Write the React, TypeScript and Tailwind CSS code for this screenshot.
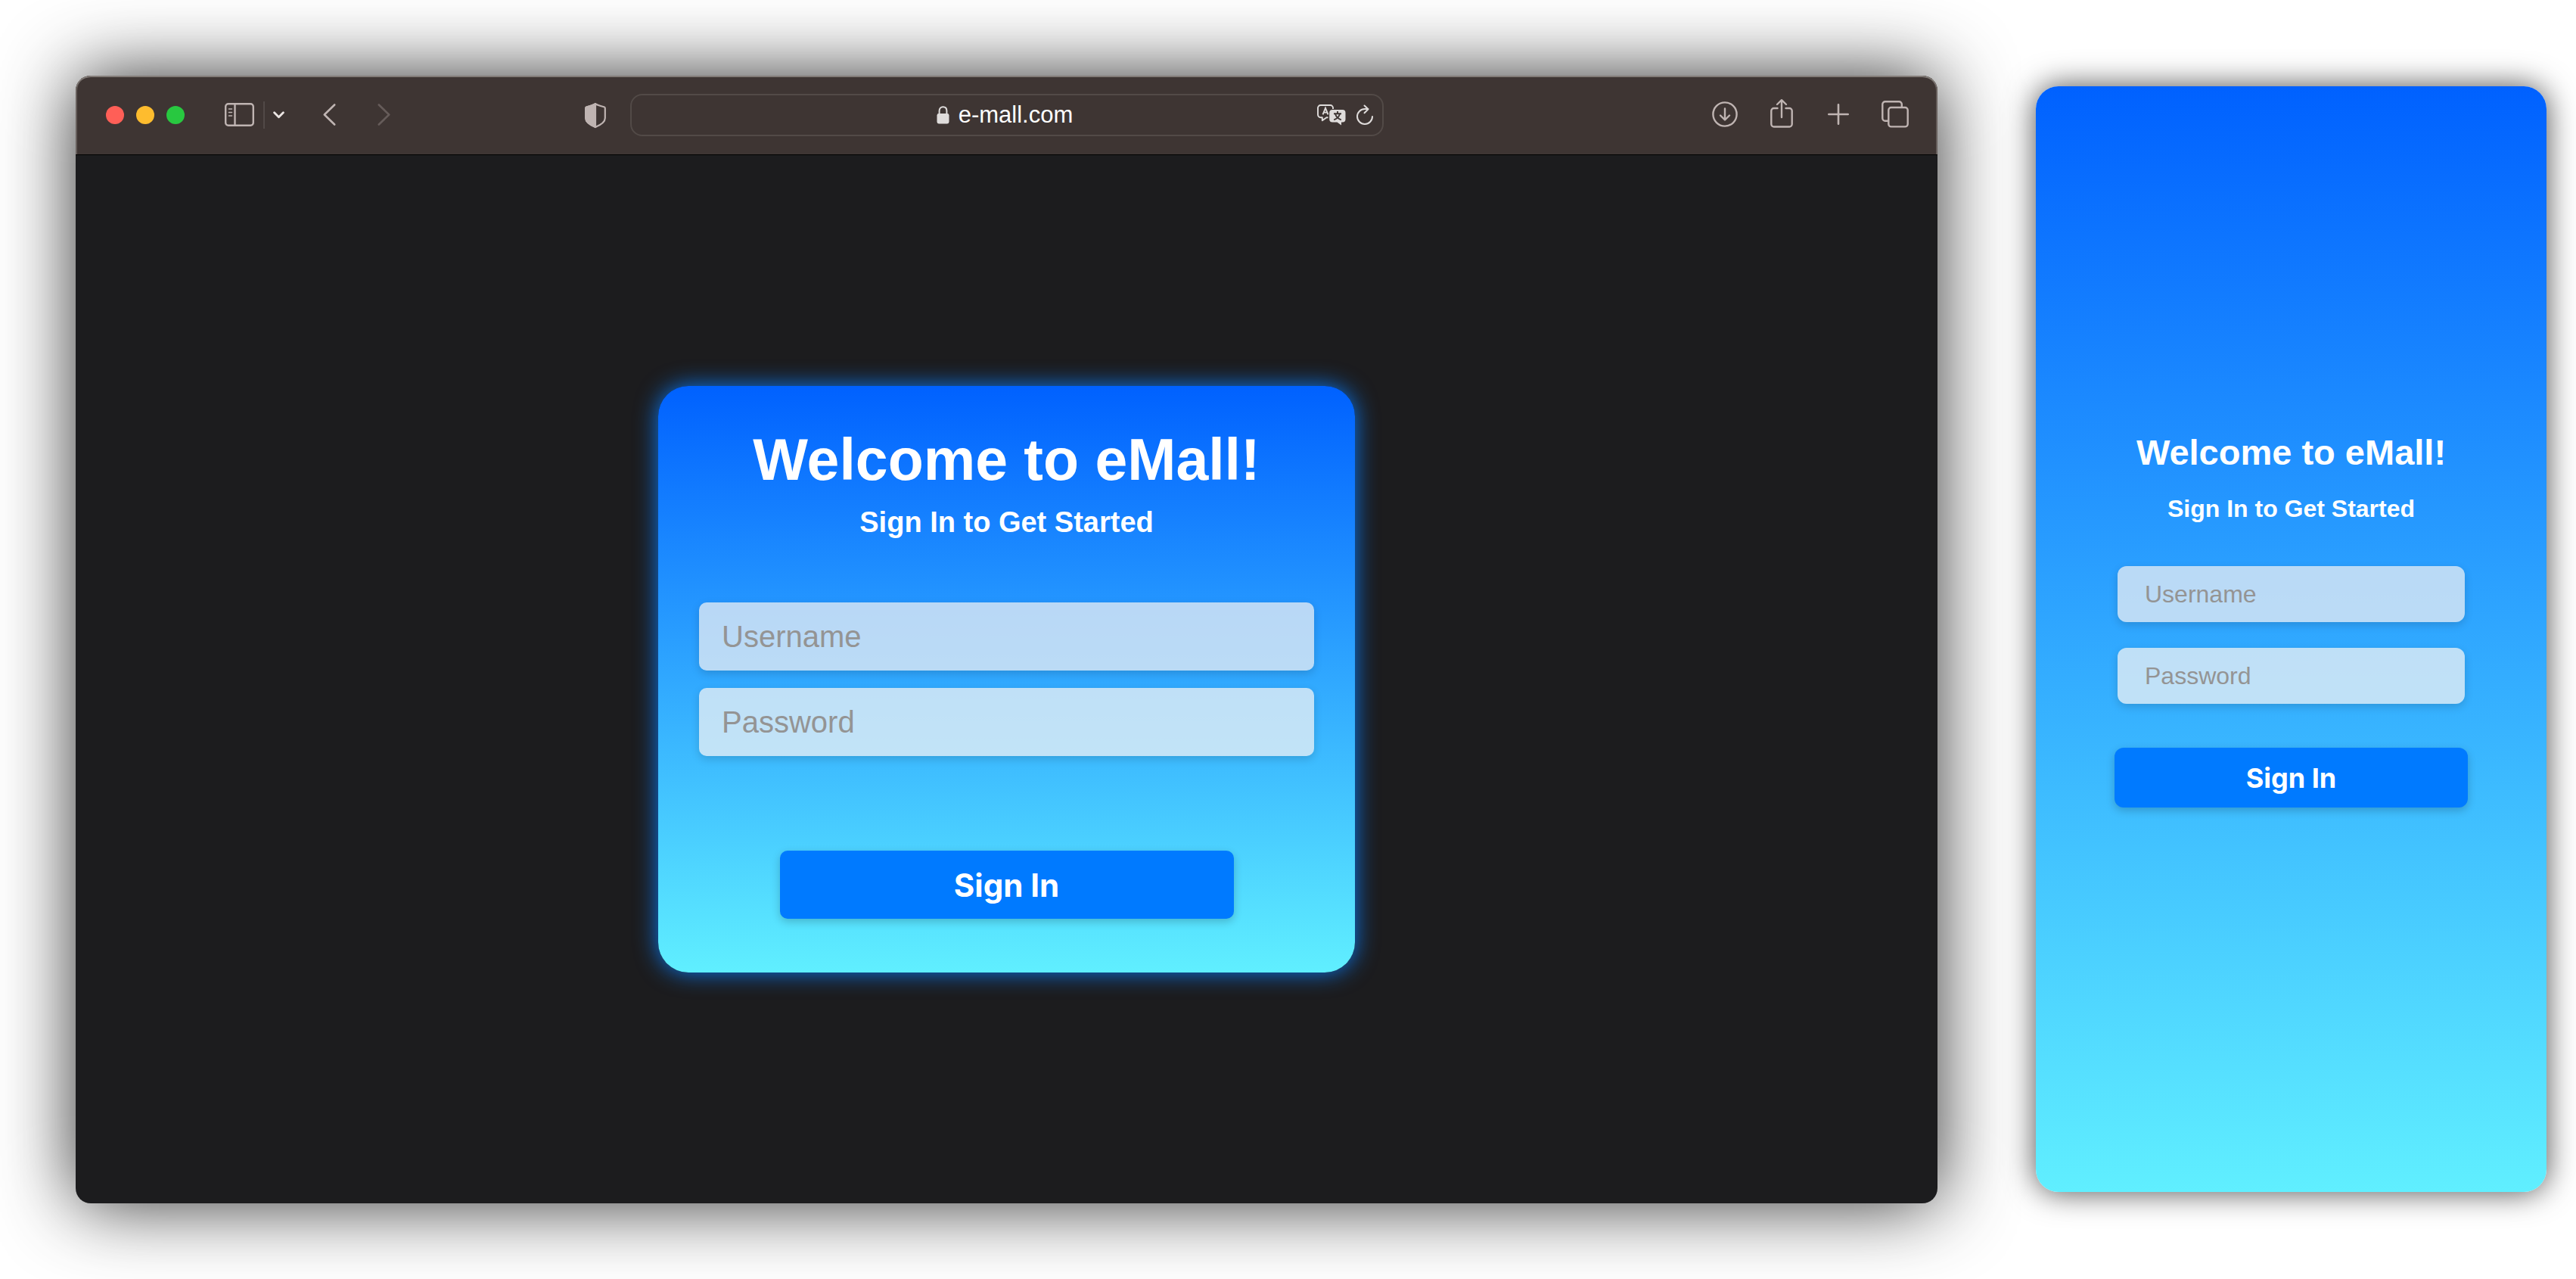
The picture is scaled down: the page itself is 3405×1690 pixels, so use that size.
import React from "react";

const icon = "block shrink-0 overflow-visible fill-none stroke-[#bfb4b2]";

function ToolButton({ label, children }: { label: string; children: React.ReactNode }) {
  return (
    <button type="button" aria-label={label} className="flex h-10 w-10 items-center justify-center pb-0.5">
      {children}
    </button>
  );
}

function Toolbar() {
  return (
    <header className="grid h-[105px] grid-cols-[1fr_996px_1fr] items-center rounded-t-[20px] border-b border-black bg-[#3e3533] shadow-[inset_0_2px_0_#827b77,inset_2px_0_0_#665e5b,inset_-2px_0_0_#665e5b]">
      <div className="flex items-center pr-8 pl-10">
        <div className="flex gap-4">
          <span className="size-6 rounded-full bg-[#ff5f57]" />
          <span className="size-6 rounded-full bg-[#febc2e]" />
          <span className="size-6 rounded-full bg-[#28c840]" />
        </div>
        <div className="ml-[52px] flex items-center">
          <ToolButton label="Show sidebar">
            <svg width="39" height="31" viewBox="0 0 39 31" className={icon} strokeWidth="2.4" strokeLinecap="round">
              <rect x="1.2" y="1.2" width="36.6" height="28.6" rx="3.6" />
              <path d="M13.5 1.2v28.6" />
              <path d="M5.500 8h4M5.500 12.500h4M5.500 17h4" strokeWidth="1.6" />
            </svg>
          </ToolButton>
          <span className="ml-3 h-9 w-0.5 bg-[#514947]" />
          <button type="button" aria-label="Tab groups" className="ml-[11px]">
            <svg width="15" height="10" viewBox="0 0 15 10" className="block fill-none stroke-[#ece6e4]" strokeWidth="2.8" strokeLinecap="round" strokeLinejoin="round">
              <path d="M1.6 1.8 7.5 7.8 13.4 1.8" />
            </svg>
          </button>
        </div>
        <div className="ml-[39px] flex gap-8">
          <ToolButton label="Back">
            <svg width="17" height="29" viewBox="0 0 17 29" className={icon} strokeWidth="2.6" strokeLinecap="round" strokeLinejoin="round">
              <path d="M15.2 1.5 1.8 14.5 15.2 27.5" />
            </svg>
          </ToolButton>
          <ToolButton label="Forward">
            <svg width="17" height="29" viewBox="0 0 17 29" className="block fill-none stroke-[#665c5a]" strokeWidth="2.6" strokeLinecap="round" strokeLinejoin="round">
              <path d="M1.8 1.5 15.2 14.5 1.8 27.5" />
            </svg>
          </ToolButton>
        </div>
        <div className="ml-auto">
          <button type="button" aria-label="Privacy report" className="block">
            <svg width="28" height="33" viewBox="0 0 28 33" className={icon} strokeWidth="2.2" strokeLinejoin="round">
              <path d="M14 1.2C11 3 6 4.300 2.500 5.300C1.500 5.600 1.200 6 1.200 7V20C1.200 26 8 29.500 14 32C20 29.500 26.800 26 26.800 20V7C26.800 6 26.500 5.600 25.500 5.300C22 4.300 17 3 14 1.200Z" />
              <path d="M14 1.200C11 3 6 4.300 2.500 5.300C1.500 5.600 1.200 6 1.200 7V20C1.200 26 8 29.500 14 32Z" className="fill-[#bfb4b2]" />
            </svg>
          </button>
        </div>
      </div>

      <div className="flex h-14 items-center rounded-[16px] border-2 border-[#524a47] pr-3 pl-[81px]">
        <div className="flex flex-1 items-center justify-center gap-3">
          <svg width="17" height="24" viewBox="0 0 17 24" className="block">
            <rect x="0.500" y="10" width="16" height="13.500" rx="2.400" className="fill-[#dfdcdb]" />
            <path d="M3.600 11V6.500C3.600 3.200 5.600 1.200 8.500 1.200S13.400 3.200 13.400 6.500V11" className="fill-none stroke-[#dfdcdb]" strokeWidth="2" />
          </svg>
          <span className="text-[31px] leading-9 text-white">e-mall.com</span>
        </div>
        <div className="flex items-center gap-3.5">
          <button type="button" aria-label="Translate">
            <svg width="38" height="28" viewBox="0 0 38 28" className="block overflow-visible">
              <path d="M14.500 17.200H12.500L6.800 21.300V17.200H4.600A3.600 3.600 0 0 1 1 13.600V4.600A3.600 3.600 0 0 1 4.600 1H17.400A3.600 3.600 0 0 1 21 4.600V6" className="fill-none stroke-[#dfdcdb]" strokeWidth="1.900" strokeLinejoin="round" />
              <path d="M7.500 13.300 11 4.800 14.500 13.300M8.700 10.600H13.300" className="fill-none stroke-[#dfdcdb]" strokeWidth="1.900" />
              <path d="M20.200 7H33.500A4 4 0 0 1 37.500 11V19.500A4 4 0 0 1 33.500 23.500H32V27.500L26.500 23.500H20.200A4 4 0 0 1 16.200 19.500V11A4 4 0 0 1 20.200 7Z" className="fill-[#dfdcdb]" />
              <path d="M27 9V12M22 12.300H32M24 12.500C25 16 27.500 18.800 31.800 20.300M30 12.500C29 16 26.500 18.800 22.200 20.300" className="fill-none stroke-[#3e3533]" strokeWidth="1.900" />
            </svg>
          </button>
          <button type="button" aria-label="Reload">
            <svg width="22" height="26" viewBox="0 0 22 26" className="block overflow-visible fill-none stroke-[#dfdcdb]" strokeWidth="2" strokeLinecap="round" strokeLinejoin="round">
              <path d="M21 15A10 10 0 1 1 11 5H15.500M10.500 0.500 15.500 5.300 10.500 10.200" />
            </svg>
          </button>
        </div>
      </div>

      <div className="flex items-center justify-end gap-[35px] pr-[36px]">
        <ToolButton label="Downloads">
          <svg width="34" height="34" viewBox="0 0 34 34" className={icon} strokeWidth="2.400" strokeLinecap="round" strokeLinejoin="round">
            <circle cx="17" cy="17" r="15.600" />
            <path d="M17 9.500V24M11 18.500 17 24.500 23 18.500" />
          </svg>
        </ToolButton>
        <ToolButton label="Share">
          <svg width="30" height="40" viewBox="0 0 30 40" className={icon} strokeWidth="2.400" strokeLinecap="round" strokeLinejoin="round">
            <path d="M9.500 12H4.800A3.500 3.500 0 0 0 1.300 15.500V33A3.500 3.500 0 0 0 4.800 36.500H25.200A3.500 3.500 0 0 0 28.700 33V15.500A3.500 3.500 0 0 0 25.200 12H20.500M15 24V1.500M9 7 15 1.200 21 7" />
          </svg>
        </ToolButton>
        <ToolButton label="New tab">
          <svg width="28" height="28" viewBox="0 0 28 28" className={icon} strokeWidth="2.600" strokeLinecap="round">
            <path d="M14 1.300V26.700M1.300 14H26.700" />
          </svg>
        </ToolButton>
        <ToolButton label="Tab overview">
          <svg width="36" height="36" viewBox="0 0 36 36" className={icon} strokeWidth="2.400" strokeLinecap="round">
            <path d="M9 26.800H4.800A3.500 3.500 0 0 1 1.300 23.300V4.800A3.500 3.500 0 0 1 4.800 1.300H23.300A3.500 3.500 0 0 1 26.800 4.800V8.500" />
            <rect x="9.300" y="9" width="25.400" height="25.400" rx="3.500" />
          </svg>
        </ToolButton>
      </div>
    </header>
  );
}

export default function App() {
  return (
    <main className="flex min-h-screen items-start bg-white pt-[100px] pr-[39px] pb-[100px] pl-[100px] font-['Liberation_Sans',Arial,sans-serif]">
      <section className="min-w-0 flex-1 rounded-[20px] bg-[#1c1c1e] shadow-[0_0_100px_rgba(0,0,0,0.82)]">
        <Toolbar />
        <div className="flex min-h-[1385px] items-center justify-center">
          <form
            onSubmit={(e) => e.preventDefault()}
            className="flex w-[921px] flex-col items-center rounded-[40px] bg-linear-to-b/srgb from-[#0061ff] to-[#60efff] px-[54px] pt-[52px] pb-[71px] shadow-[0_0_30px_#0a78f0]"
          >
            <h1 className="text-[77px] leading-[90px] font-bold text-white">Welcome to eMall!</h1>
            <p className="mt-4 text-[38px] leading-[44px] font-bold text-white">Sign In to Get Started</p>
            <div className="mt-[84px] flex w-full flex-col gap-[23px]">
              <input
                aria-label="Username"
                placeholder="Username"
                className="h-[90px] w-full rounded-[10px] bg-[#dfe9f4]/80 px-[30px] text-[40px] text-gray-800 shadow-[0_4px_12px_rgba(0,0,0,0.15)] placeholder:text-[#949494]"
              />
              <input
                type="password"
                aria-label="Password"
                placeholder="Password"
                className="h-[90px] w-full rounded-[10px] bg-[#e3edf5]/80 px-[30px] text-[40px] text-gray-800 shadow-[0_4px_12px_rgba(0,0,0,0.15)] placeholder:text-[#949494]"
              />
            </div>
            <button type="submit" className="mt-[125px] h-[90px] w-[600px] rounded-[10px] bg-[#007aff] font-['Inter'] text-[42px] font-bold text-white shadow-[0_4px_12px_rgba(0,0,0,0.2)]">
              Sign In
            </button>
          </form>
        </div>
      </section>

      <section className="mt-[14px] ml-[130px] w-[675px] shrink-0 rounded-[30px] bg-linear-to-b/srgb from-[#0061ff] to-[#60efff] shadow-[0_0_40px_rgba(0,0,0,0.7)]">
        <form onSubmit={(e) => e.preventDefault()} className="flex min-h-[1461px] flex-col items-center pt-[456px]">
          <h2 className="text-[47px] leading-[56px] font-bold text-white">Welcome to eMall!</h2>
          <p className="mt-7 text-[32px] leading-9 font-bold text-white">Sign In to Get Started</p>
          <div className="mt-[58px] flex w-[459px] flex-col gap-[34px]">
            <input
              aria-label="Username"
              placeholder="Username"
              className="h-[74px] w-full rounded-[12px] bg-[#dfe9f4]/80 px-[36px] text-[32px] text-gray-800 shadow-[0_4px_12px_rgba(0,0,0,0.15)] placeholder:text-[#949494]"
            />
            <input
              type="password"
              aria-label="Password"
              placeholder="Password"
              className="h-[74px] w-full rounded-[12px] bg-[#e3edf5]/80 px-[36px] text-[32px] text-gray-800 shadow-[0_4px_12px_rgba(0,0,0,0.15)] placeholder:text-[#949494]"
            />
          </div>
          <button type="submit" className="mt-[58px] h-[79px] w-[467px] rounded-[12px] bg-[#007aff] font-['Inter'] text-[36px] font-bold text-white shadow-[0_4px_12px_rgba(0,0,0,0.2)]">
            Sign In
          </button>
        </form>
      </section>
    </main>
  );
}
